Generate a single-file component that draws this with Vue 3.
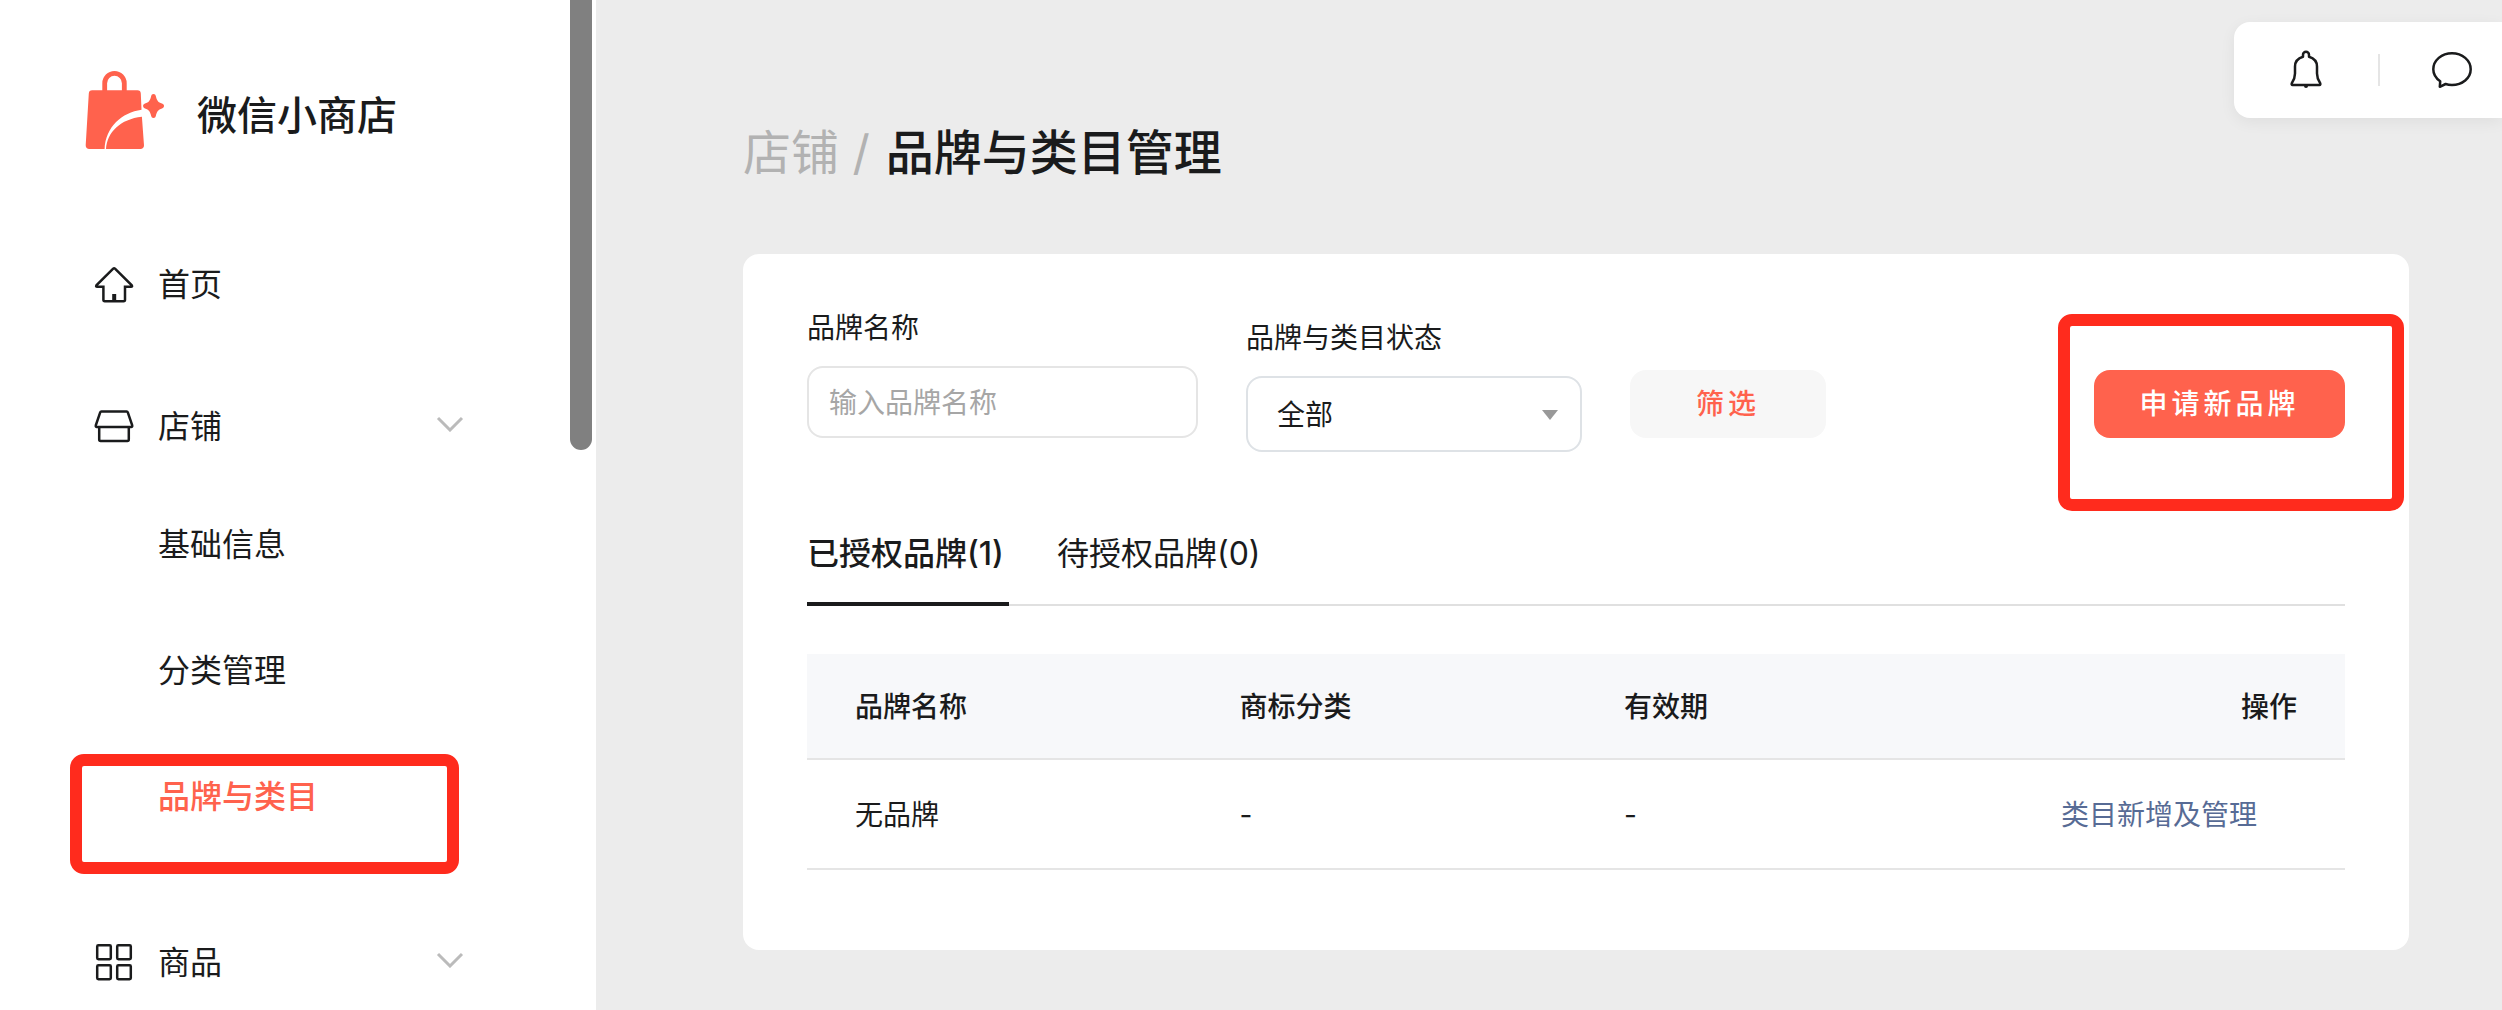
<script setup>
import { ref } from 'vue'

const brandName = ref('')
const status = ref('all')
const activeTab = ref('authorized')

const shopItems = [
  { key: 'info', label: '基础信息' },
  { key: 'category', label: '分类管理' },
  { key: 'brand', label: '品牌与类目', active: true }
]

const tabs = [
  { key: 'authorized', label: '已授权品牌(1)' },
  { key: 'pending', label: '待授权品牌(0)' }
]

const rows = [
  { name: '无品牌', trademark: '-', expires: '-' }
]
</script>

<template>
  <div class="layout">
    <aside class="sidebar">
      <div class="brand">
        <svg class="brand-logo" viewBox="0 0 80 80" aria-hidden="true">
          <path d="M19.7 22V13.2a9.8 9.8 0 0 1 19.6 0V22" fill="none" stroke="#ff624d" stroke-width="4.8" />
          <path d="M7.2 20.3H52.4a3.4 3.4 0 0 1 3.4 3.2L56.5 39.8C37 42.5 20.5 57 19.6 79H4.2A3.5 3.5 0 0 1 .7 75.3L3.8 23.5a3.4 3.4 0 0 1 3.4-3.2Z" fill="#ff624d" />
          <path d="M56.9 46.8 59 75.2A3.6 3.6 0 0 1 55.4 79H21C22 62.5 35.5 49 56.9 46.8Z" fill="#ff624d" />
          <path d="M68.5 24c1.4 0 2 .9 2.3 2 1 4.6 2.4 6.4 6.2 7.6 1.3.5 2 1.2 2 2.4s-.7 1.9-2 2.4c-3.800 1.300-5.200 3-6.200 7.600-.3 1.200-.9 2-2.300 2s-2-.8-2.300-2c-1-4.600-2.400-6.300-6.200-7.600-1.200-.5-1.900-1.200-1.900-2.400s.7-1.900 1.900-2.400c3.800-1.200 5.200-3 6.200-7.600.3-1.100.9-2 2.300-2Z" fill="#ff624d" />
        </svg>
        <span class="brand-title">微信小商店</span>
      </div>

      <nav class="menu">
        <a class="menu-item" href="#">
          <svg class="menu-icon" viewBox="0 0 40 40" aria-hidden="true">
            <path d="M19.2 3.6 2.4 20.3q-.9 1.5.8 1.5H9.4V34.8q0 1.4 1.4 1.4H29.6q1.4 0 1.4-1.4V21.8H37q1.7 0 .8-1.5L21 3.6q-.9-.8-1.8 0Z" fill="none" stroke="currentColor" stroke-width="2.5" />
            <path d="M18.200 29H22.200V36H18.200Z" fill="currentColor" />
          </svg>
          <span>首页</span>
        </a>

        <div class="menu-group">
          <button class="menu-item" type="button">
            <svg class="menu-icon" viewBox="0 0 40 40" fill="none" stroke="currentColor" stroke-width="2.5" aria-hidden="true">
              <path d="M7.4 4.5H32.6q.9 0 1.200.9L38.200 18.400q.3 1.500-1 1.500H2.800q-1.300 0-1-1.500L6.200 5.400q.3-.9 1.200-.9Z" />
              <path d="M5.200 20V32.600q0 1.400 1.400 1.400H33.400q1.400 0 1.400-1.400V20" />
            </svg>
            <span>店铺</span>
            <svg class="chevron" viewBox="0 0 28 16" aria-hidden="true">
              <path d="M2 2 14 14 26 2" />
            </svg>
          </button>
          <ul class="submenu">
            <li v-for="item in shopItems" :key="item.key" class="submenu-item">
              <a href="#" class="submenu-link" :class="{ active: item.active }">{{ item.label }}</a>
              <span v-if="item.active" class="mark mark-menu"></span>
            </li>
          </ul>
        </div>

        <button class="menu-item" type="button">
          <svg class="menu-icon" viewBox="0 0 40 40" fill="none" stroke="currentColor" stroke-width="2.5" aria-hidden="true">
            <rect x="3.2" y="2.2" width="13.6" height="14" rx="1.2" />
            <rect x="23.2" y="2.2" width="13.6" height="14" rx="1.2" />
            <rect x="3.2" y="22.2" width="13.6" height="14" rx="1.2" />
            <rect x="23.2" y="22.2" width="13.6" height="14" rx="1.2" />
          </svg>
          <span>商品</span>
          <svg class="chevron" viewBox="0 0 28 16" aria-hidden="true">
            <path d="M2 2 14 14 26 2" />
          </svg>
        </button>
      </nav>

      <div class="scroll-thumb"></div>
    </aside>

    <main class="content">
      <div class="toolbar">
        <button class="tool" type="button" aria-label="通知">
          <svg viewBox="0 0 40 40" fill="none" stroke="currentColor" stroke-width="2.5" stroke-linejoin="round" aria-hidden="true">
            <path d="M17 6.800V4.800a3 3 0 0 1 6 0V6.800C28.500 8.500 31 12 31 16.500V23.500C31 28 32.400 30.600 34.200 33.200Q34.800 35 33.400 35H6.600Q5.200 35 5.800 33.200C7.600 30.600 9 28 9 23.500V16.500C9 12 11.500 8.500 17 6.800Z" />
            <path d="M18 36h4a2 2 0 0 1-4 0Z" fill="currentColor" stroke="none" />
          </svg>
        </button>
        <span class="divider"></span>
        <button class="tool" type="button" aria-label="消息">
          <svg viewBox="0 0 40 40" fill="none" stroke="currentColor" stroke-width="2.5" stroke-linejoin="round" aria-hidden="true">
            <path d="M20 3.200C30.300 3.200 38.700 10.400 38.700 19.300S30.300 35 20 35Q16.500 35 13.600 34L7.800 36.800 8.200 31.300C3.800 28.300 1.300 24 1.300 19.300 1.300 10.400 9.700 3.200 20 3.200Z" />
          </svg>
        </button>
      </div>

      <h1 class="crumbs">
        <span class="crumb-parent">店铺 /</span>
        <span>品牌与类目管理</span>
      </h1>

      <section class="card">
        <form class="filters" @submit.prevent>
          <div class="field field-name">
            <label for="brand-name">品牌名称</label>
            <input id="brand-name" v-model="brandName" type="text" placeholder="输入品牌名称">
          </div>
          <div class="field field-status">
            <label for="brand-status">品牌与类目状态</label>
            <div class="select-box">
              <select id="brand-status" v-model="status">
                <option value="all">全部</option>
              </select>
            </div>
          </div>
          <button class="btn btn-filter" type="submit">筛选</button>
          <div class="apply">
            <button class="btn btn-primary" type="button">申请新品牌</button>
            <span class="mark mark-apply"></span>
          </div>
        </form>

        <div class="tabs" role="tablist">
          <button
            v-for="tab in tabs"
            :key="tab.key"
            class="tab"
            :class="{ active: tab.key === activeTab }"
            type="button"
            role="tab"
            :aria-selected="tab.key === activeTab"
            @click="activeTab = tab.key"
          >
            {{ tab.label }}
          </button>
        </div>

        <table class="table">
          <thead>
            <tr>
              <th>品牌名称</th>
              <th>商标分类</th>
              <th>有效期</th>
              <th class="col-action">操作</th>
            </tr>
          </thead>
          <tbody>
            <tr v-for="row in rows" :key="row.name">
              <td>{{ row.name }}</td>
              <td>{{ row.trademark }}</td>
              <td>{{ row.expires }}</td>
              <td class="col-action"><a class="row-link" href="#">类目新增及管理</a></td>
            </tr>
          </tbody>
        </table>
      </section>
    </main>
  </div>
</template>

<style>
body {
  margin: 0;
  background: #ececec;
}
</style>

<style scoped>
.layout {
  display: flex;
  height: 100vh;
  overflow: hidden;
  background: #ececec;
  color: #1a1b1c;
  font-family: Inter, "Noto Sans CJK SC", sans-serif;
  font-size: 28px;
  line-height: 40px;
}

.layout * {
  box-sizing: border-box;
}

button,
input,
select {
  font: inherit;
  color: inherit;
}

button {
  padding: 0;
  border: 0;
  background: none;
  cursor: pointer;
}

a {
  color: inherit;
  text-decoration: none;
}

/* sidebar */
.sidebar {
  position: relative;
  flex: 0 0 596px;
  overflow: hidden;
  background: #fff;
}

.brand {
  display: flex;
  align-items: flex-end;
  gap: 32px;
  padding: 70px 0 80px 85px;
}

.brand-logo {
  width: 80px;
  height: 80px;
}

.brand-title {
  font-size: 40px;
  font-weight: 500;
  line-height: 68px;
}

.menu {
  display: flex;
  flex-direction: column;
  gap: 32px;
  font-size: 32px;
}

.menu-item {
  display: flex;
  align-items: center;
  gap: 24px;
  width: 100%;
  height: 110px;
  padding: 0 132px 0 94px;
  text-align: left;
}

.menu-icon {
  flex: none;
  width: 40px;
  height: 40px;
}

.chevron {
  width: 28px;
  height: 16px;
  margin: 0 0 6px auto;
  fill: none;
  stroke: #bbb;
  stroke-width: 3;
}

.submenu {
  margin: 0;
  padding: 0 0 16px;
  list-style: none;
}

.submenu-item {
  position: relative;
}

.submenu-link {
  display: flex;
  align-items: center;
  height: 126px;
  padding-left: 158px;
}

.submenu-link.active {
  color: #ff624d;
  font-weight: 500;
}

.scroll-thumb {
  position: absolute;
  top: -12px;
  right: 4px;
  width: 22px;
  height: 462px;
  border-radius: 11px;
  background: #808080;
}

/* highlight frames */
.mark {
  position: absolute;
  border: 12px solid #ff2b1d;
  border-radius: 14px;
  pointer-events: none;
}

.mark-menu {
  top: 20px;
  left: 70px;
  width: 389px;
  height: 120px;
}

.mark-apply {
  top: -56px;
  right: -59px;
  width: 346px;
  height: 197px;
}

/* content */
.content {
  position: relative;
  flex: 1;
  min-width: 0;
  padding: 120px 93px 60px 147px;
}

.toolbar {
  position: absolute;
  top: 22px;
  right: 0;
  display: flex;
  align-items: center;
  gap: 52px;
  height: 96px;
  padding: 0 30px 0 52px;
  border-radius: 16px 0 0 16px;
  background: #fff;
  box-shadow: 0 4px 16px rgba(0, 0, 0, 0.06);
}

.tool {
  width: 40px;
  height: 40px;
}

.tool svg {
  display: block;
  width: 40px;
  height: 40px;
}

.divider {
  width: 2px;
  height: 32px;
  background: #e5e5e5;
}

.crumbs {
  display: flex;
  gap: 16px;
  margin: 0 0 68px;
  font-size: 48px;
  font-weight: 500;
  line-height: 66px;
}

.crumb-parent {
  color: #b2b2b2;
  font-weight: 400;
}

.card {
  padding: 54px 64px 80px;
  border-radius: 16px;
  background: #fff;
}

.filters {
  display: flex;
  align-items: flex-start;
  gap: 48px;
}

.field {
  display: flex;
  flex-direction: column;
  gap: 18px;
}

.field-name {
  width: 391px;
}

.field-name input {
  width: 100%;
  height: 72px;
  padding: 2px 20px 0;
  border: 2px solid #e5e5e5;
  border-radius: 16px;
  background: #fff;
  outline: none;
}

.field-name input::placeholder {
  color: #a6a6a6;
  opacity: 1;
}

.field-status {
  width: 336px;
  padding-top: 10px;
}

.select-box {
  position: relative;
}

.select-box::after {
  content: "";
  position: absolute;
  top: 34px;
  right: 24px;
  border: 8px solid transparent;
  border-top: 10px solid #999;
  border-bottom: 0;
  pointer-events: none;
}

.select-box select {
  display: block;
  width: 100%;
  height: 76px;
  padding: 2px 56px 0 29px;
  border: 2px solid #dee2e6;
  border-radius: 16px;
  background: #fff;
  appearance: none;
  outline: none;
}

.btn {
  height: 68px;
  border-radius: 16px;
  font-weight: 500;
  letter-spacing: 4px;
}

.btn-filter {
  width: 196px;
  margin-top: 62px;
  background: #f7f7f7;
  color: #ff624d;
}

.apply {
  position: relative;
  margin: 62px 0 0 auto;
}

.btn-primary {
  display: block;
  width: 251px;
  background: #ff624d;
  color: #fff;
}

.tabs {
  display: flex;
  gap: 48px;
  margin-top: 76px;
  border-bottom: 2px solid #e0e0e0;
}

.tab {
  min-width: 202px;
  height: 78px;
  margin-bottom: -2px;
  padding-bottom: 22px;
  border-bottom: 4px solid transparent;
  font-size: 32px;
  text-align: left;
}

.tab.active {
  border-bottom-color: #1a1b1c;
  font-weight: 500;
}

.table {
  width: 100%;
  margin-top: 48px;
  border-collapse: separate;
  border-spacing: 0;
  table-layout: fixed;
}

.table th,
.table td {
  padding: 33px 48px 31px;
  border-bottom: 2px solid #e5e5e5;
  text-align: left;
}

.table th {
  background: #f7f8fa;
  font-weight: 500;
}

.table td {
  padding: 35px 48px 33px;
}

.table .col-action {
  text-align: right;
}

.row-link {
  margin-right: 40px;
  color: #576b95;
}
</style>
